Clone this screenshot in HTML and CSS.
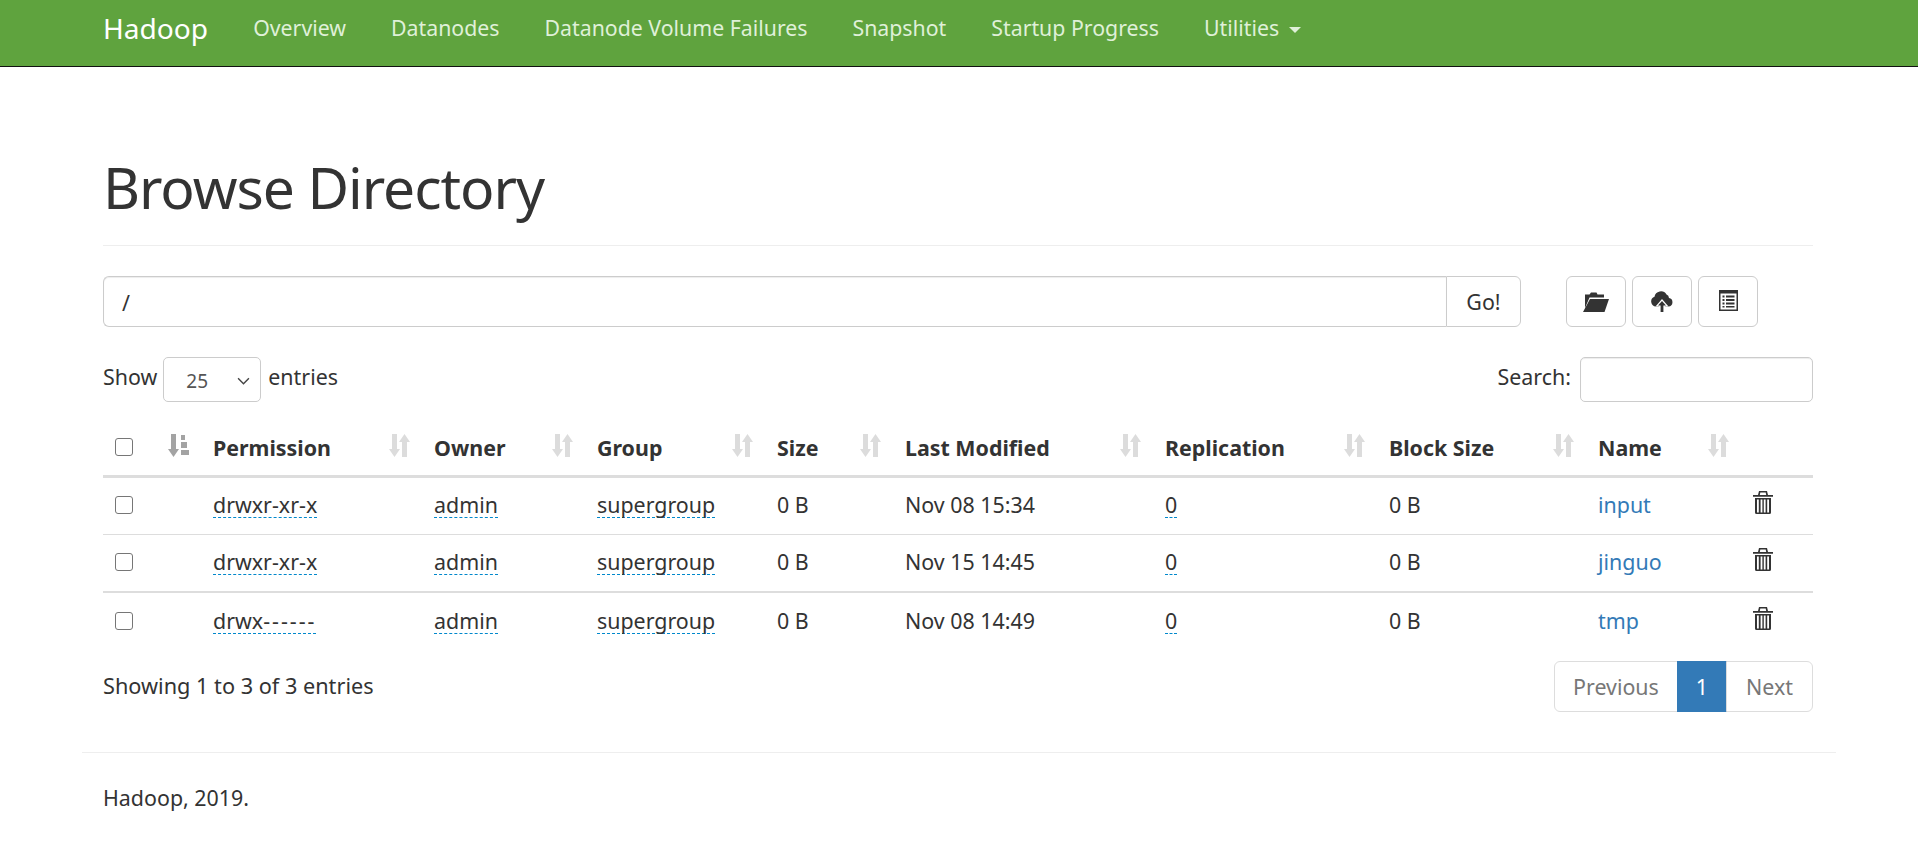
FILE: index.html
```html
<!DOCTYPE html>
<html lang="en">
<head>
<meta charset="utf-8">
<title>Browsing HDFS</title>
<link rel="stylesheet" href="styles.css">
</head>
<body>
<nav class="navbar">
  <a class="brand">Hadoop</a>
  <a class="nav-link">Overview</a>
  <a class="nav-link">Datanodes</a>
  <a class="nav-link">Datanode Volume Failures</a>
  <a class="nav-link">Snapshot</a>
  <a class="nav-link">Startup Progress</a>
  <a class="nav-link">Utilities <span class="caret"></span></a>
</nav>
<main class="container">
  <h1 class="page-title">Browse Directory</h1>
  <div class="path-row">
    <div class="path-group">
      <div class="path-input">/</div>
      <button class="go-btn">Go!</button>
    </div>
    <div class="tools">
      <button class="tool-btn"><svg class="ic-folder" viewBox="0 0 26 20"><path d="M2 2.500h4.500L8 .5h5.500l1 2H21v3H6.500L2 16z" fill="#333"/><path d="M7 7h19l-4.500 13H0z" fill="#333"/></svg></button>
      <button class="tool-btn"><svg class="ic-cloud" viewBox="0 0 22 21"><path d="M5 15.500a5 5 0 0 1-1.500-9.700A6.500 6.500 0 0 1 15.500 3.500a4 4 0 0 1 2.500 3.500 4.300 4.300 0 0 1-.5 8.500z" fill="#333"/><path d="M11 8l6.500 7.500h-3.700V21H8.200v-5.500H4.500z" fill="#fff"/><path d="M11 10l4 4.500h-2.600V21H9.600v-6.500H7z" fill="#333"/></svg></button>
      <button class="tool-btn"><svg class="ic-list" viewBox="0 0 19 21"><path fill-rule="evenodd" d="M0 0h19v21H0z M1.500 3.500V19.500h16V3.500z" fill="#333"/><path d="M3.500 5.500h2v2h-2z M7 5.500h8.500v2H7z M3.500 9h2v2h-2z M7 9h8.500v2H7z M3.500 12.500h2v2h-2z M7 12.500h8.500v2H7z M3.500 16h2v1.500h-2z M7 16h8.500v1.500H7z" fill="#333"/></svg></button>
    </div>
  </div>
  <div class="table-controls">
    <label class="ctl">Show
      <span class="select"><span>25</span><svg class="chev" viewBox="0 0 12 7"><path d="M1 1l5 5 5-5" fill="none" stroke="#444" stroke-width="1.300"/></svg></span>
      entries</label>
    <label class="ctl">Search: <span class="search"></span></label>
  </div>
  <table class="listing">
    <colgroup>
      <col class="c1"><col class="c2"><col class="c3"><col class="c4"><col class="c5"><col class="c6"><col class="c7"><col class="c8"><col class="c9"><col class="c10"><col>
    </colgroup>
    <thead>
      <tr>
        <th><span class="cb head-cb"></span></th>
        <th class="sort-col"><svg class="sort active" viewBox="0 0 21 23"><path d="M3 0h5v15h3l-5.500 8L0 15h3z M13 1h4v5h-4z M13 8h6v6h-6z M13 16h8v5h-8z" fill="#a3a3a3"/></svg></th>
        <th>Permission<svg class="sort" viewBox="0 0 21 23"><use href="#updown"/></svg></th>
        <th>Owner<svg class="sort" viewBox="0 0 21 23"><use href="#updown"/></svg></th>
        <th>Group<svg class="sort" viewBox="0 0 21 23"><use href="#updown"/></svg></th>
        <th>Size<svg class="sort" viewBox="0 0 21 23"><use href="#updown"/></svg></th>
        <th>Last Modified<svg class="sort" viewBox="0 0 21 23"><use href="#updown"/></svg></th>
        <th>Replication<svg class="sort" viewBox="0 0 21 23"><use href="#updown"/></svg></th>
        <th>Block Size<svg class="sort" viewBox="0 0 21 23"><use href="#updown"/></svg></th>
        <th>Name<svg class="sort" viewBox="0 0 21 23"><use href="#updown"/></svg></th>
        <th></th>
      </tr>
    </thead>
    <tbody>
      <tr class="r1">
        <td><span class="cb"></span></td><td></td>
        <td><span class="edit">drwxr-xr-x</span></td>
        <td><span class="edit">admin</span></td>
        <td><span class="edit">supergroup</span></td>
        <td>0 B</td><td>Nov 08 15:34</td>
        <td><span class="edit">0</span></td><td>0 B</td>
        <td><a class="file">input</a></td>
        <td><svg class="trash" viewBox="0 0 20 23"><use href="#trash"/></svg></td>
      </tr>
      <tr class="r2">
        <td><span class="cb"></span></td><td></td>
        <td><span class="edit">drwxr-xr-x</span></td>
        <td><span class="edit">admin</span></td>
        <td><span class="edit">supergroup</span></td>
        <td>0 B</td><td>Nov 15 14:45</td>
        <td><span class="edit">0</span></td><td>0 B</td>
        <td><a class="file">jinguo</a></td>
        <td><svg class="trash" viewBox="0 0 20 23"><use href="#trash"/></svg></td>
      </tr>
      <tr class="r3">
        <td><span class="cb"></span></td><td></td>
        <td><span class="edit">drwx<span class="dashes">------</span></span></td>
        <td><span class="edit">admin</span></td>
        <td><span class="edit">supergroup</span></td>
        <td>0 B</td><td>Nov 08 14:49</td>
        <td><span class="edit">0</span></td><td>0 B</td>
        <td><a class="file">tmp</a></td>
        <td><svg class="trash" viewBox="0 0 20 23"><use href="#trash"/></svg></td>
      </tr>
    </tbody>
  </table>
  <div class="table-foot">
    <div class="info">Showing 1 to 3 of 3 entries</div>
    <div class="pager"><a class="pg first">Previous</a><a class="pg current">1</a><a class="pg last">Next</a></div>
  </div>
</main>
<hr class="foot-rule">
<footer class="footer">Hadoop, 2019.</footer>
<svg class="defs" aria-hidden="true">
  <defs>
    <g id="updown"><path d="M3 0h5v15h3l-5.500 8L0 15h3z" fill="#dcdcdc"/><path d="M15.500 0L21 8h-3v15h-5V8h-3z" fill="#dcdcdc"/></g>
    <g id="trash"><path fill="#333" fill-rule="evenodd" d="M6 0h8l1 4h5v1.800H0V4h5z M7.300 1.500L6.800 4h6.400l-.5-2.500z M2 7h16v14.500a1.500 1.500 0 0 1-1.500 1.500h-13A1.500 1.500 0 0 1 2 21.500z M4 8.500v13h1.800v-13z M7.600 8.500v13h1.800v-13z M10.800 8.500v13h1.800v-13z M14.200 8.500v13H16v-13z"/></g>
  </defs>
</svg>
</body>
</html>
```
FILE: styles.css
```css
* { box-sizing: border-box; }
html, body { margin: 0; padding: 0; }
body {
  font-family: "Noto Sans", "Open Sans", "Liberation Sans", sans-serif;
  font-size: 21.4px;
  line-height: 28px;
  color: #333;
  background: #fff;
}
.navbar {
  display: flex;
  align-items: center;
  height: 67px;
  padding: 0 0 10px 103px;
  background: #5fa33e;
  border-bottom: 1px solid #111;
  color: #dff0d8;
  font-size: 21.3px;
}
.brand { font-size: 28.1px; color: #fff; margin-right: 45px; }
.nav-link { margin-right: 45px; }
.caret {
  display: inline-block;
  width: 0; height: 0;
  margin-left: 4px;
  vertical-align: middle;
  border-top: 6px solid #dff0d8;
  border-left: 6px solid transparent;
  border-right: 6px solid transparent;
}
.container { padding: 0 105px 0 103px; }
.page-title {
  margin: 82px 0 0;
  padding-bottom: 20px;
  font-size: 57px;
  letter-spacing: -1.050px;
  font-weight: 400;
  line-height: 76px;
  border-bottom: 1px solid #eee;
}
.path-row { display: flex; margin-top: 30px; height: 51px; }
.path-group { display: flex; width: 1418px; }
.path-input {
  flex: 1;
  padding: 12px 18px 0;
  border: 1px solid #ccc;
  border-right: 0;
  border-radius: 6px 0 0 6px;
  box-shadow: inset 0 1px 1px rgba(0,0,0,.075);
}
.go-btn, .tool-btn {
  font: inherit;
  color: #333;
  background: #fff;
  border: 1px solid #ccc;
}
.go-btn { width: 75px; border-radius: 0 6px 6px 0; }
.tools { display: flex; gap: 6px; margin-left: 45px; }
.tool-btn { display: flex; align-items: center; justify-content: center; width: 60px; border-radius: 6px; padding: 0; }
.ic-folder { width: 26px; height: 20px; display: block; }
.ic-cloud { width: 22px; height: 21px; display: block; }
.ic-list { width: 19px; height: 21px; display: block; margin-bottom: 2px; }
.table-controls { display: flex; justify-content: space-between; margin-top: 30px; height: 45px; }
.ctl { display: flex; align-items: flex-start; gap: 5px; line-height: 40px; }
.select {
  display: flex; align-items: center; justify-content: space-between;
  width: 98px; height: 45px;
  padding: 2px 10px 0 22px;
  margin: 0 2px 0 1px;
  border: 1px solid #ccc; border-radius: 5px;
  font-size: 19px; line-height: 28px; color: #555;
}
.chev { width: 13px; height: 8px; }
.search {
  display: block; width: 233px; height: 45px; margin-left: 4px;
  border: 1px solid #ccc; border-radius: 5px;
  box-shadow: inset 0 1px 1px rgba(0,0,0,.075);
}
.listing { width: 100%; border-collapse: collapse; table-layout: fixed; margin-top: 20px; }
.c1 { width: 53px; } .c2 { width: 46px; } .c3 { width: 221px; } .c4 { width: 163px; }
.c5 { width: 180px; } .c6 { width: 128px; } .c7 { width: 260px; } .c8 { width: 224px; }
.c9 { width: 209px; } .c10 { width: 155px; }
.listing th { position: relative; height: 54px; padding: 0 11px; text-align: left; font-weight: 700; border-bottom: 3px solid #ddd; }
.listing td { height: 58px; padding: 0 11px 1px; vertical-align: middle; border-bottom: 1px solid #ddd; }
.listing .r2 td { border-bottom-width: 2px; }
.listing .r3 td { border-bottom: 0; }
.cb {
  display: block; width: 18px; height: 18px; margin-left: 1px;
  border: 1px solid #767676; border-radius: 3px; background: #fff;
}
.head-cb { margin-bottom: 2px; }
.sort { position: absolute; top: 12px; right: 13px; width: 21px; height: 23px; }
.sort.active { left: 12px; right: auto; }
.edit { display: inline-block; line-height: 25px; border-bottom: 1px dashed #0088cc; }
.dashes { letter-spacing: 2px; }
.file { color: #337ab7; }
.trash { display: block; width: 20px; height: 23px; margin: -5px 0 0 0; }
.table-foot { display: flex; justify-content: space-between; align-items: center; margin-top: 11px; height: 51px; }
.info { font-size: 21.7px; padding-bottom: 2px; }
.pager { display: flex; height: 51px; }
.pg { display: flex; align-items: center; padding: 0 19px; border: 1px solid #ddd; margin-left: -1px; color: #777; }
.first { border-radius: 6px 0 0 6px; padding: 0 18px; }
.last { border-radius: 0 6px 6px 0; }
.current { background: #337ab7; border-color: #337ab7; color: #fff; padding: 0 18px; }
.foot-rule { margin: 40px 82px 0; border: 0; border-top: 1px solid #eee; }
.footer { padding: 31px 103px 20px; }
.defs { position: absolute; width: 0; height: 0; }
```
